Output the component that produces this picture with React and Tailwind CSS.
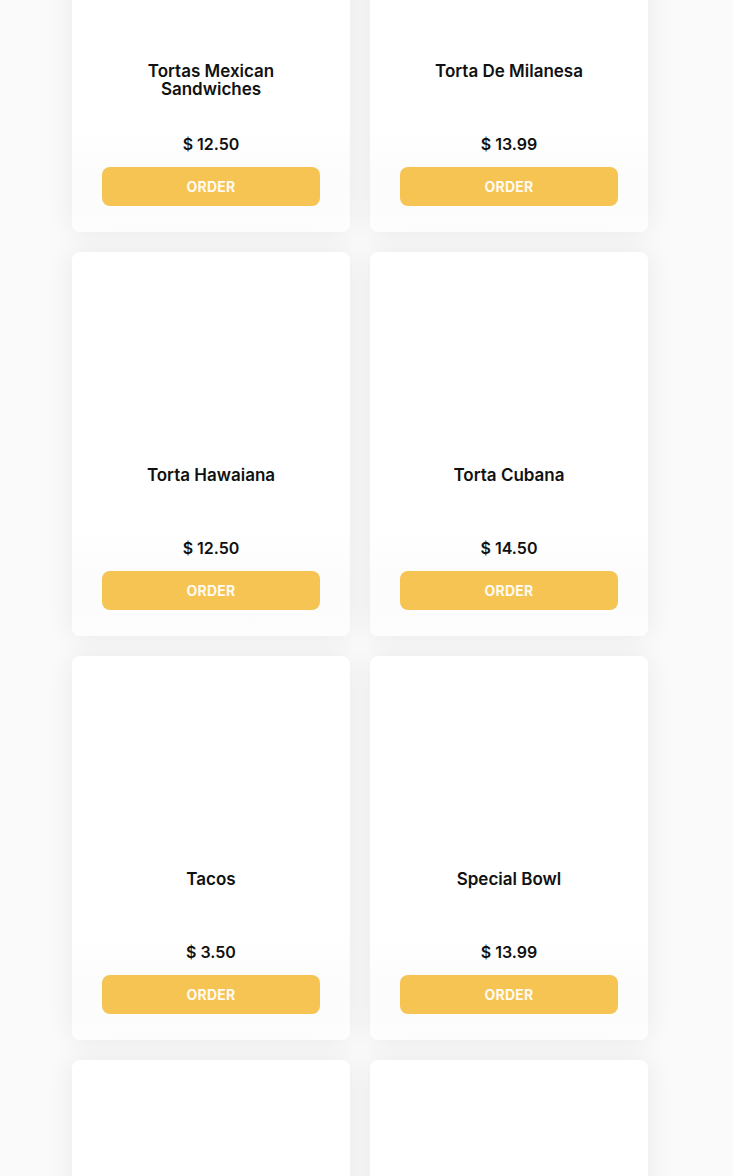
const items = [
  { name: 'Tortas Mexican Sandwiches', price: '12.50' },
  { name: 'Torta De Milanesa', price: '13.99' },
  { name: 'Torta Hawaiana', price: '12.50' },
  { name: 'Torta Cubana', price: '14.50' },
  { name: 'Tacos', price: '3.50' },
  { name: 'Special Bowl', price: '13.99' },
];

function Card({ name, price }) {
  return (
    <div className="flex h-[384px] flex-col rounded-lg bg-white shadow-[0_0_28px_rgba(0,0,0,0.07)]">
      <div className="h-[214px] shrink-0" />
      <h3 className="mx-auto w-[160px] text-center text-[17px] font-semibold leading-[18px] text-[#111]">
        {name}
      </h3>
      <div className="mt-auto rounded-b-lg bg-gradient-to-b from-white via-[#fcfcfc] to-[#fdfdfd] px-[30px] pb-[26px] pt-[6px]">
        <p className="text-center text-[16px] font-semibold leading-[26px] text-[#111]">$ {price}</p>
        <button className="mt-[10px] h-[39px] w-full rounded-lg bg-[#f6c453] text-[14px] font-bold uppercase tracking-[0.02em] text-[#fffaf0]">
          Order
        </button>
      </div>
    </div>
  );
}

export default function App() {
  return (
    <div className="h-[1176px] overflow-hidden bg-[#fafafa] font-['Inter',sans-serif]">
      <div className="-mt-[152px] ml-[72px] grid w-[576px] grid-cols-2 gap-5">
        {items.map((it) => (
          <Card key={it.name} {...it} />
        ))}
        <div className="h-[384px] rounded-lg bg-white shadow-[0_0_28px_rgba(0,0,0,0.07)]" />
        <div className="h-[384px] rounded-lg bg-white shadow-[0_0_28px_rgba(0,0,0,0.07)]" />
      </div>
    </div>
  );
}
